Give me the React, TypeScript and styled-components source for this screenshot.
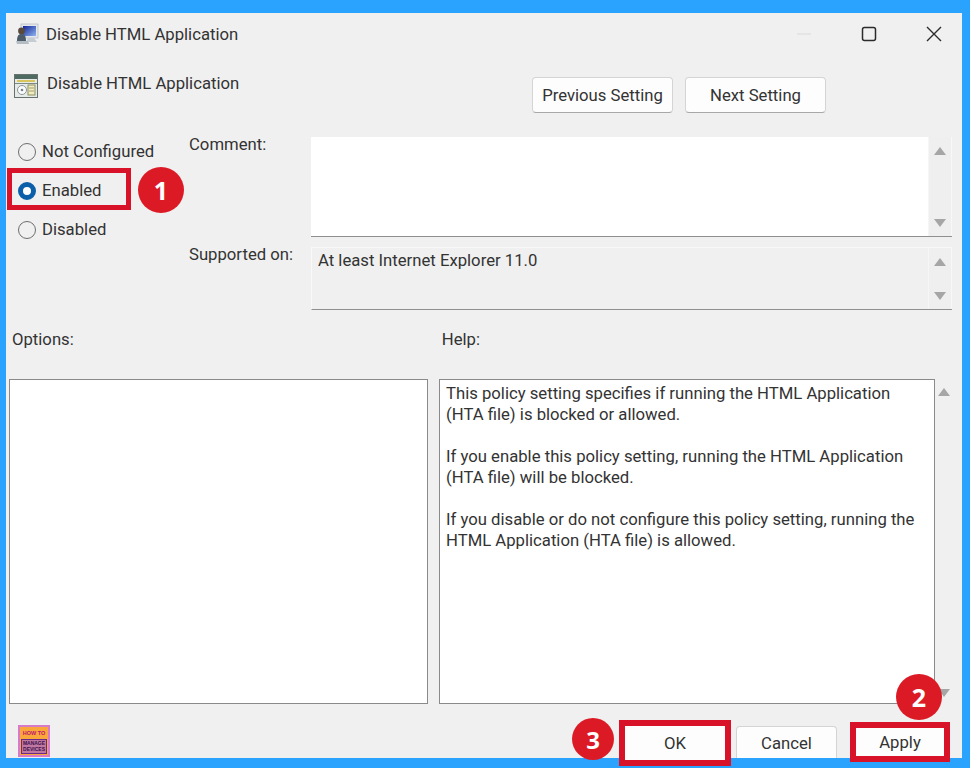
import styled, { createGlobalStyle } from 'styled-components';

const GlobalStyle = createGlobalStyle`
  html, body {
    margin: 0;
    height: 768px;
    overflow: hidden;
    background: #2aa3ff;
    font-family: Roboto, 'Open Sans', sans-serif;
    font-size: 16.7px;
    line-height: 21px;
    color: #333333;
  }
`;

function TitleIcon() {
  return (
    <svg width="23" height="22" viewBox="0 0 23 22">
      <defs>
        <linearGradient id="screen" x1="0" y1="0" x2="1" y2="1">
          <stop offset="0" stopColor="#12249a" />
          <stop offset="1" stopColor="#8fb4ee" />
        </linearGradient>
      </defs>
      <rect x="5" y="1" width="17" height="14" fill="#e4e7ec" stroke="#aab0b8" strokeWidth="0.6" />
      <rect x="7" y="3" width="13" height="10" fill="url(#screen)" />
      <path d="M12 15 H18 L21 19 H10 Z" fill="#c6ccd4" />
      <circle cx="5.5" cy="8" r="3.4" fill="#5a4a3c" />
      <path d="M1 18 C1 12 3 11 5.5 11 C8 11 10 12 10 18 Z" fill="#4d5a68" />
      <path d="M0 18 H12 L13 21 H1 Z" fill="#b4bcc4" />
    </svg>
  );
}

function PolicyIcon() {
  return (
    <svg width="24" height="24" viewBox="0 0 24 24">
      <rect x="0.5" y="0.5" width="23" height="23" fill="#e6ebe8" stroke="#66736f" />
      <rect x="1" y="1" width="22" height="4" fill="#4f6a60" />
      <rect x="3" y="6" width="18" height="2" fill="#d8c65c" />
      <rect x="1" y="9" width="22" height="1" fill="#7c8a86" />
      <circle cx="8" cy="16" r="4.5" fill="#fbfbfb" stroke="#8a959a" />
      <circle cx="8" cy="16" r="1.3" fill="#76838a" />
      <rect x="14" y="11" width="7" height="10" fill="#f2ecc0" stroke="#8a8f5e" />
      <path d="M15 14 H20 M15 17 H20" stroke="#8a8f5e" strokeWidth="0.8" />
    </svg>
  );
}

function ScrollArrow({ down }: { down?: boolean }) {
  return (
    <svg width="12" height="8" viewBox="0 0 12 8">
      <path d={down ? 'M0 0 H12 L6 8 Z' : 'M0 8 H12 L6 0 Z'} fill="#a6a6a6" />
    </svg>
  );
}

export default function App() {
  return (
    <>
      <GlobalStyle />
      <Window>
        <TitleBar>
          <TitleIcon />
          <TitleText>Disable HTML Application</TitleText>
          <Controls>
            <svg width="16" height="16" viewBox="0 0 16 16">
              <path d="M1 8 H15" stroke="#dddddd" strokeWidth="1.2" />
            </svg>
            <svg width="16" height="16" viewBox="0 0 16 16">
              <rect x="1.5" y="1.5" width="13" height="13" rx="2" fill="none" stroke="#2b2b2b" strokeWidth="1.5" />
            </svg>
            <svg width="16" height="16" viewBox="0 0 16 16">
              <path d="M1 1 L15 15 M15 1 L1 15" stroke="#2b2b2b" strokeWidth="1.4" />
            </svg>
          </Controls>
        </TitleBar>

        <SubHeader>
          <PolicyTitle>
            <PolicyIcon />
            <span>Disable HTML Application</span>
          </PolicyTitle>
          <NavButtons>
            <NavButton>Previous Setting</NavButton>
            <NavButton>Next Setting</NavButton>
          </NavButtons>
        </SubHeader>

        <ConfigArea>
          <RadioGroup>
            <RadioRow>
              <Radio />
              Not Configured
            </RadioRow>
            <RadioRow $marked>
              <Radio $checked />
              Enabled
              <EnabledBadge>1</EnabledBadge>
            </RadioRow>
            <RadioRow>
              <Radio />
              Disabled
            </RadioRow>
          </RadioGroup>

          <Fields>
            <FieldRow>
              <FieldLabel>Comment:</FieldLabel>
              <CommentBox>
                <BoxBody />
                <BoxScroll>
                  <ScrollArrow />
                  <ScrollArrow down />
                </BoxScroll>
              </CommentBox>
            </FieldRow>
            <FieldRow>
              <FieldLabel>Supported on:</FieldLabel>
              <SupportedBox>
                <SupportedText>At least Internet Explorer 11.0</SupportedText>
                <BoxScroll>
                  <ScrollArrow />
                  <ScrollArrow down />
                </BoxScroll>
              </SupportedBox>
            </FieldRow>
          </Fields>
        </ConfigArea>

        <PaneLabels>
          <span>Options:</span>
          <span>Help:</span>
        </PaneLabels>

        <Panes>
          <OptionsPane />
          <HelpPane>
            <p>
              This policy setting specifies if running the HTML Application
              <br />
              (HTA file) is blocked or allowed.
            </p>
            <p>
              If you enable this policy setting, running the HTML Application
              <br />
              (HTA file) will be blocked.
            </p>
            <p>
              If you disable or do not configure this policy setting, running the
              <br />
              HTML Application (HTA file) is allowed.
            </p>
          </HelpPane>
          <PaneScroll>
            <ScrollArrow />
            <ScrollArrow down />
          </PaneScroll>
        </Panes>

        <Footer>
          <Logo>
            <LogoTop>HOW TO</LogoTop>
            <LogoBottom>MANAGE DEVICES</LogoBottom>
          </Logo>
          <FooterButtons>
            <OkButton>
              OK
              <OkBadge>3</OkBadge>
            </OkButton>
            <CancelButton>Cancel</CancelButton>
            <ApplyButton>
              Apply
              <ApplyBadge>2</ApplyBadge>
            </ApplyButton>
          </FooterButtons>
        </Footer>
      </Window>
    </>
  );
}

const Window = styled.div`
  display: flex;
  flex-direction: column;
  box-sizing: border-box;
  width: 956px;
  height: 745px;
  margin: 13px 0 0 6px;
  background: #f0f0f0;
`;

const TitleBar = styled.div`
  display: flex;
  align-items: center;
  height: 42px;
  padding: 0 20px 0 10px;
`;

const TitleText = styled.span`
  margin-left: 7px;
`;

const Controls = styled.div`
  display: flex;
  align-items: center;
  gap: 49px;
  margin-left: auto;
`;

const SubHeader = styled.div`
  display: flex;
  justify-content: space-between;
  height: 77px;
  padding: 22px 136px 0 8px;
  box-sizing: border-box;
`;

const PolicyTitle = styled.div`
  display: flex;
  align-items: flex-start;
  gap: 9px;
  margin-top: -3px;

  span {
    margin-top: -1px;
  }
`;

const NavButtons = styled.div`
  display: flex;
  gap: 12px;
`;

const NavButton = styled.div`
  display: flex;
  align-items: center;
  justify-content: center;
  box-sizing: border-box;
  width: 141px;
  height: 36px;
  background: #fdfdfd;
  border: 1px solid #d4d4d4;
  border-bottom-color: #a8a8a8;
  border-radius: 4px;
`;

const ConfigArea = styled.div`
  display: flex;
`;

const RadioGroup = styled.div`
  display: flex;
  flex-direction: column;
  width: 183px;
`;

const RadioRow = styled.label<{ $marked?: boolean }>`
  position: relative;
  display: flex;
  align-items: center;
  gap: 6px;
  height: 39px;
  padding-left: 12px;

  ${(props) =>
    props.$marked &&
    `
    &::before {
      content: '';
      position: absolute;
      left: 1px;
      top: -3px;
      width: 124px;
      height: 42px;
      box-sizing: border-box;
      border: 5px solid #d81228;
    }
  `}
`;

const Radio = styled.span<{ $checked?: boolean }>`
  box-sizing: border-box;
  width: 18px;
  height: 18px;
  border-radius: 50%;
  background: ${(props) => (props.$checked ? '#fff' : 'transparent')};
  border: ${(props) => (props.$checked ? '5px solid #0a5fa8' : '1.5px solid #6e6e6e')};
`;

const Badge = styled.span`
  position: absolute;
  display: flex;
  align-items: center;
  justify-content: center;
  border-radius: 50%;
  background: #dc1a26;
  color: #fff;
  font-family: 'Open Sans', sans-serif;
  font-weight: 700;
`;

const EnabledBadge = styled(Badge)`
  left: 132px;
  top: -4px;
  width: 46px;
  height: 46px;
  font-size: 25px;
`;

const Fields = styled.div`
  display: flex;
  flex-direction: column;
  gap: 5px;
`;

const FieldRow = styled.div`
  display: flex;
`;

const FieldLabel = styled.span`
  width: 122px;
  margin-top: 2px;
`;

const CommentBox = styled.div`
  display: flex;
  box-sizing: border-box;
  width: 641px;
  height: 100px;
  margin-top: 5px;
  border-bottom: 1px solid #8f8f8f;
`;

const BoxBody = styled.div`
  flex: 1;
  background: #fff;
`;

const BoxScroll = styled.div`
  display: flex;
  flex-direction: column;
  align-items: center;
  justify-content: space-between;
  width: 24px;
  padding: 10px 0 9px;
  box-sizing: border-box;
  background: #efefef;
  border-left: 1px solid #f6f6f6;
  border-right: 1px solid #f8f8f8;
`;

const SupportedBox = styled.div`
  display: flex;
  box-sizing: border-box;
  width: 641px;
  height: 63px;
  margin-top: 5px;
  border-top: 1px solid #f8f8f8;
  border-left: 1px solid #f8f8f8;
  border-bottom: 1px solid #8f8f8f;
`;

const SupportedText = styled.div`
  flex: 1;
  padding: 2px 6px;
`;

const PaneLabels = styled.div`
  display: flex;
  gap: 368px;
  margin-top: 19px;
  padding-left: 6px;
`;

const Panes = styled.div`
  display: flex;
  gap: 11px;
  height: 325px;
  margin-top: 29px;
  padding-left: 3px;
`;

const OptionsPane = styled.div`
  box-sizing: border-box;
  width: 419px;
  background: #fff;
  border: 1.5px solid #8a8a8a;
`;

const HelpPane = styled.div`
  box-sizing: border-box;
  width: 496px;
  padding: 3px 6px;
  background: #fff;
  border: 1.5px solid #8a8a8a;

  p {
    margin: 0 0 21px;
  }
`;

const PaneScroll = styled.div`
  display: flex;
  flex-direction: column;
  align-items: center;
  justify-content: space-between;
  width: 4px;
  padding: 9px 0 7px;
  margin-left: -4px;
  box-sizing: border-box;
`;

const Footer = styled.div`
  display: flex;
  align-items: flex-end;
  justify-content: space-between;
  height: 54px;
  padding: 0 12px;
`;

const Logo = styled.div`
  display: flex;
  flex-direction: column;
  box-sizing: border-box;
  width: 32px;
  height: 32px;
  margin-bottom: 1px;
  padding: 1px;
  border: 2px solid #d77ac8;
  background: #f9a63a;
  text-align: center;
  font-family: 'Liberation Sans', sans-serif;
  font-weight: 700;
  color: #c0146e;
`;

const LogoTop = styled.span`
  font-size: 5.5px;
  line-height: 11px;
`;

const LogoBottom = styled.span`
  flex: 1;
  font-size: 5px;
  line-height: 6px;
  background: #c178a0;
  border: 1px solid #6a2a8a;
  color: #3a1050;
  overflow: hidden;
`;

const FooterButtons = styled.div`
  display: flex;
  align-items: flex-end;
  gap: 5px;
`;

const FooterButton = styled.div`
  position: relative;
  display: flex;
  align-items: center;
  justify-content: center;
  box-sizing: border-box;
  background: #fdfdfd;
`;

const OkButton = styled(FooterButton)`
  width: 112px;
  height: 46px;
  margin-bottom: -8px;
  border: 6px solid #d81228;
`;

const CancelButton = styled(FooterButton)`
  width: 101px;
  height: 32px;
  padding-top: 2px;
  border: 1px solid #d4d4d4;
  border-bottom: 0;
  border-radius: 4px 4px 0 0;
`;

const ApplyButton = styled(FooterButton)`
  width: 100px;
  height: 40px;
  margin-left: 8px;
  margin-bottom: -4px;
  border: 6px solid #d81228;
`;

const OkBadge = styled(Badge)`
  left: -53px;
  top: -8px;
  width: 42px;
  height: 42px;
  font-size: 24px;
`;

const ApplyBadge = styled(Badge)`
  left: 40px;
  top: -54px;
  width: 46px;
  height: 46px;
  font-size: 25px;
`;
